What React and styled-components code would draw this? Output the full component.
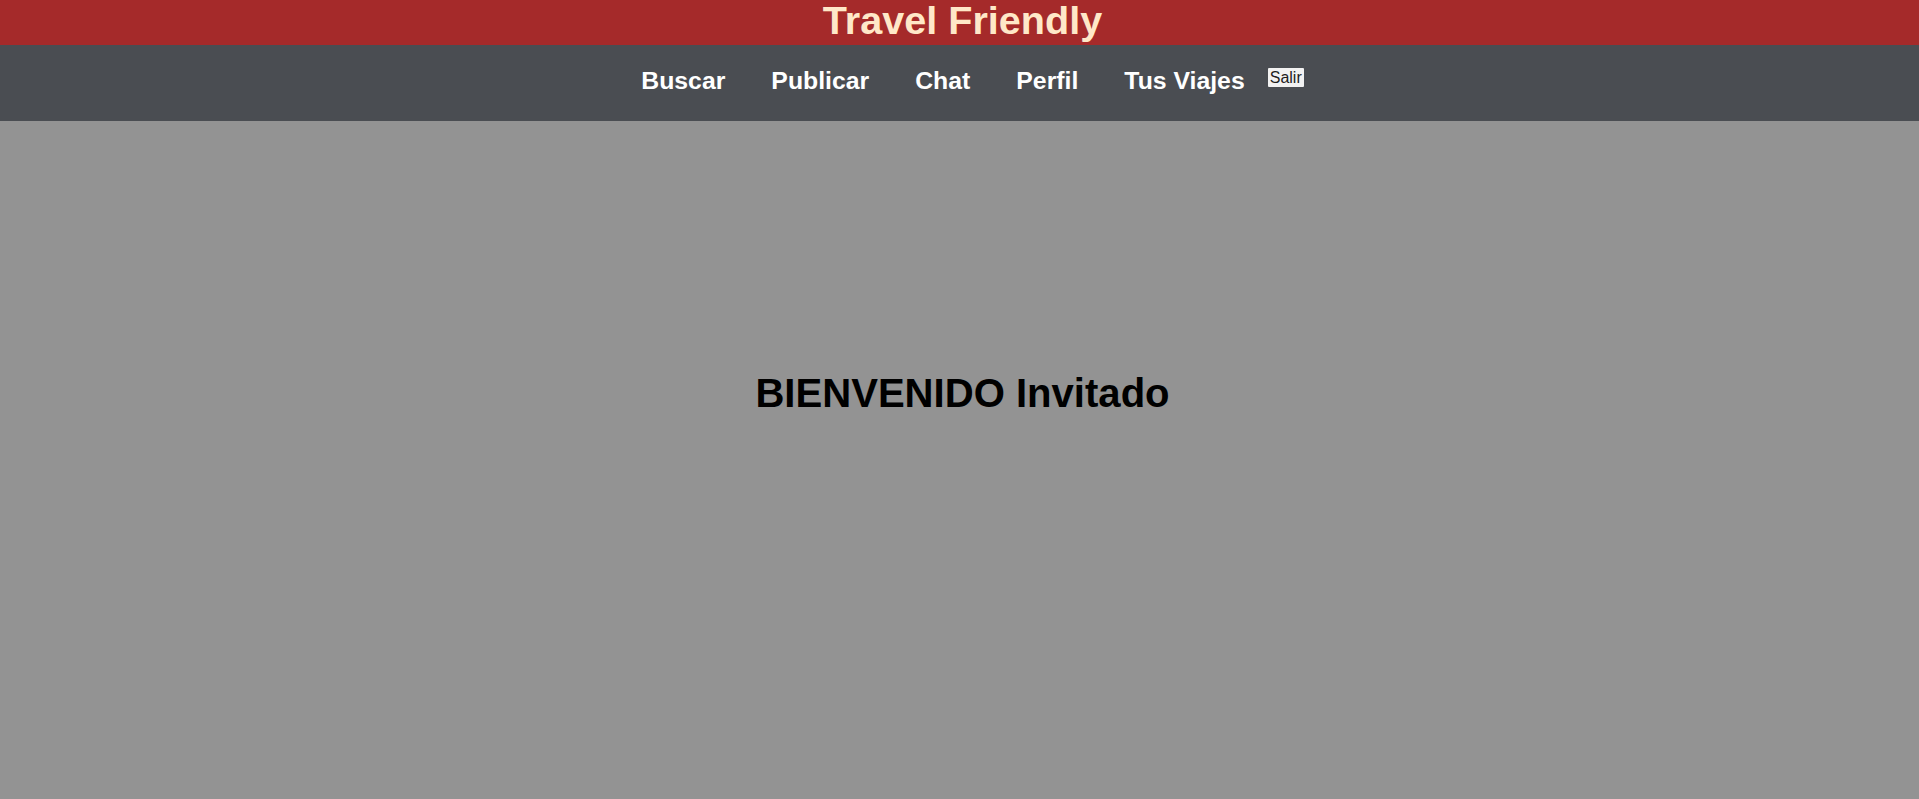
import React from "react";
import styled, { createGlobalStyle } from "styled-components";

const Global = createGlobalStyle`
  html, body {
    margin: 0;
    padding: 0;
    background: #939393;
    font-family: "Liberation Sans", Arial, sans-serif;
  }
  #root {
    min-height: 100vh;
  }
`;

const Page = styled.div`
  min-height: 100vh;
  display: flex;
  flex-direction: column;
  padding-left: 6px;
  background: #939393;
`;

const TitleBar = styled.header`
  margin-left: -6px;
  padding-left: 6px;
  background: #a52a2a;
  height: 45px;
  box-sizing: border-box;
  padding-bottom: 4px;
  text-align: center;
`;

const Title = styled.h1`
  margin: 0;
  font-size: 39.6px;
  line-height: 41px;
  font-weight: 700;
  color: #ffe8c8;
`;

const NavBar = styled.nav`
  margin-left: -6px;
  padding-left: 3px;
  background: #4a4d52;
  height: 76px;
  box-sizing: border-box;
  padding-top: 21.5px;
  display: flex;
  justify-content: center;
  align-items: flex-start;
`;

const NavLink = styled.a`
  display: block;
  padding: 0 23px;
  font-size: 24.8px;
  font-weight: 700;
  color: #ffffff;
  text-decoration: none;
  line-height: normal;
  cursor: pointer;
`;

const ExitButton = styled.button`
  margin: 1px 0 0 0;
  padding: 0 2px;
  height: 19px;
  border: 0;
  border-radius: 1px;
  background: #f2f2f2;
  color: #1e1e1e;
  font-family: "Liberation Sans", Arial, sans-serif;
  font-size: 16px;
  line-height: 19px;
  cursor: pointer;
`;

const Main = styled.main`
  flex: 1;
  padding-top: 250px;
  text-align: center;
`;

const Welcome = styled.h2`
  margin: 0;
  font-size: 40.1px;
  font-weight: 700;
  line-height: normal;
  color: #000000;
`;

const links = ["Buscar", "Publicar", "Chat", "Perfil", "Tus Viajes"];

export default function App() {
  return (
    <>
      <Global />
      <Page>
        <TitleBar>
          <Title>Travel Friendly</Title>
        </TitleBar>
        <NavBar>
          {links.map((l) => (
            <NavLink key={l}>{l}</NavLink>
          ))}
          <ExitButton>Salir</ExitButton>
        </NavBar>
        <Main>
          <Welcome>BIENVENIDO Invitado</Welcome>
        </Main>
      </Page>
    </>
  );
}
